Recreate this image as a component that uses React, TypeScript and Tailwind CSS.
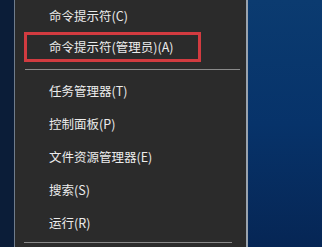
import React from "react";

const items = ["任务管理器(T)", "控制面板(P)", "文件资源管理器(E)", "搜索(S)", "运行(R)"];

const App: React.FC = () => {
  return (
    <div
      className="flex h-[247px] w-[322px] overflow-hidden"
      style={{ fontFamily: '"Noto Sans CJK SC", "Noto Sans", sans-serif' }}
    >
      <div className="w-[14px] bg-[#0b1d38]" />
      <div className="w-[1px] bg-[#6f7c8c]" />
      <div className="flex w-[231px] flex-col bg-[#2b2b2b] text-[12.5px] text-[#ececec]">
        <div className="flex h-[32px] items-center pl-[34px]">命令提示符(C)</div>
        <div className="ml-[9px] flex h-[30px] w-[177px] items-center border-[3px] border-[#d23b40] pl-[22px]">
          命令提示符(管理员)(A)
        </div>
        <div className="ml-[10px] mt-[7px] h-[1px] w-[215px] bg-[#8a8a8a]" />
        <div className="h-[5px]" />
        {items.map((t) => (
          <div key={t} className="flex h-[33px] items-center pl-[34px]">
            {t}
          </div>
        ))}
        <div className="ml-[9px] mt-[2px] h-[1px] w-[208px] bg-[#8a8a8a]" />
      </div>
      <div className="w-[2px] bg-[#9aa3ad]" />
      <div className="flex-1 bg-gradient-to-b from-[#0b3b70] via-[#07336a] to-[#062655]" />
    </div>
  );
};

export default App;
